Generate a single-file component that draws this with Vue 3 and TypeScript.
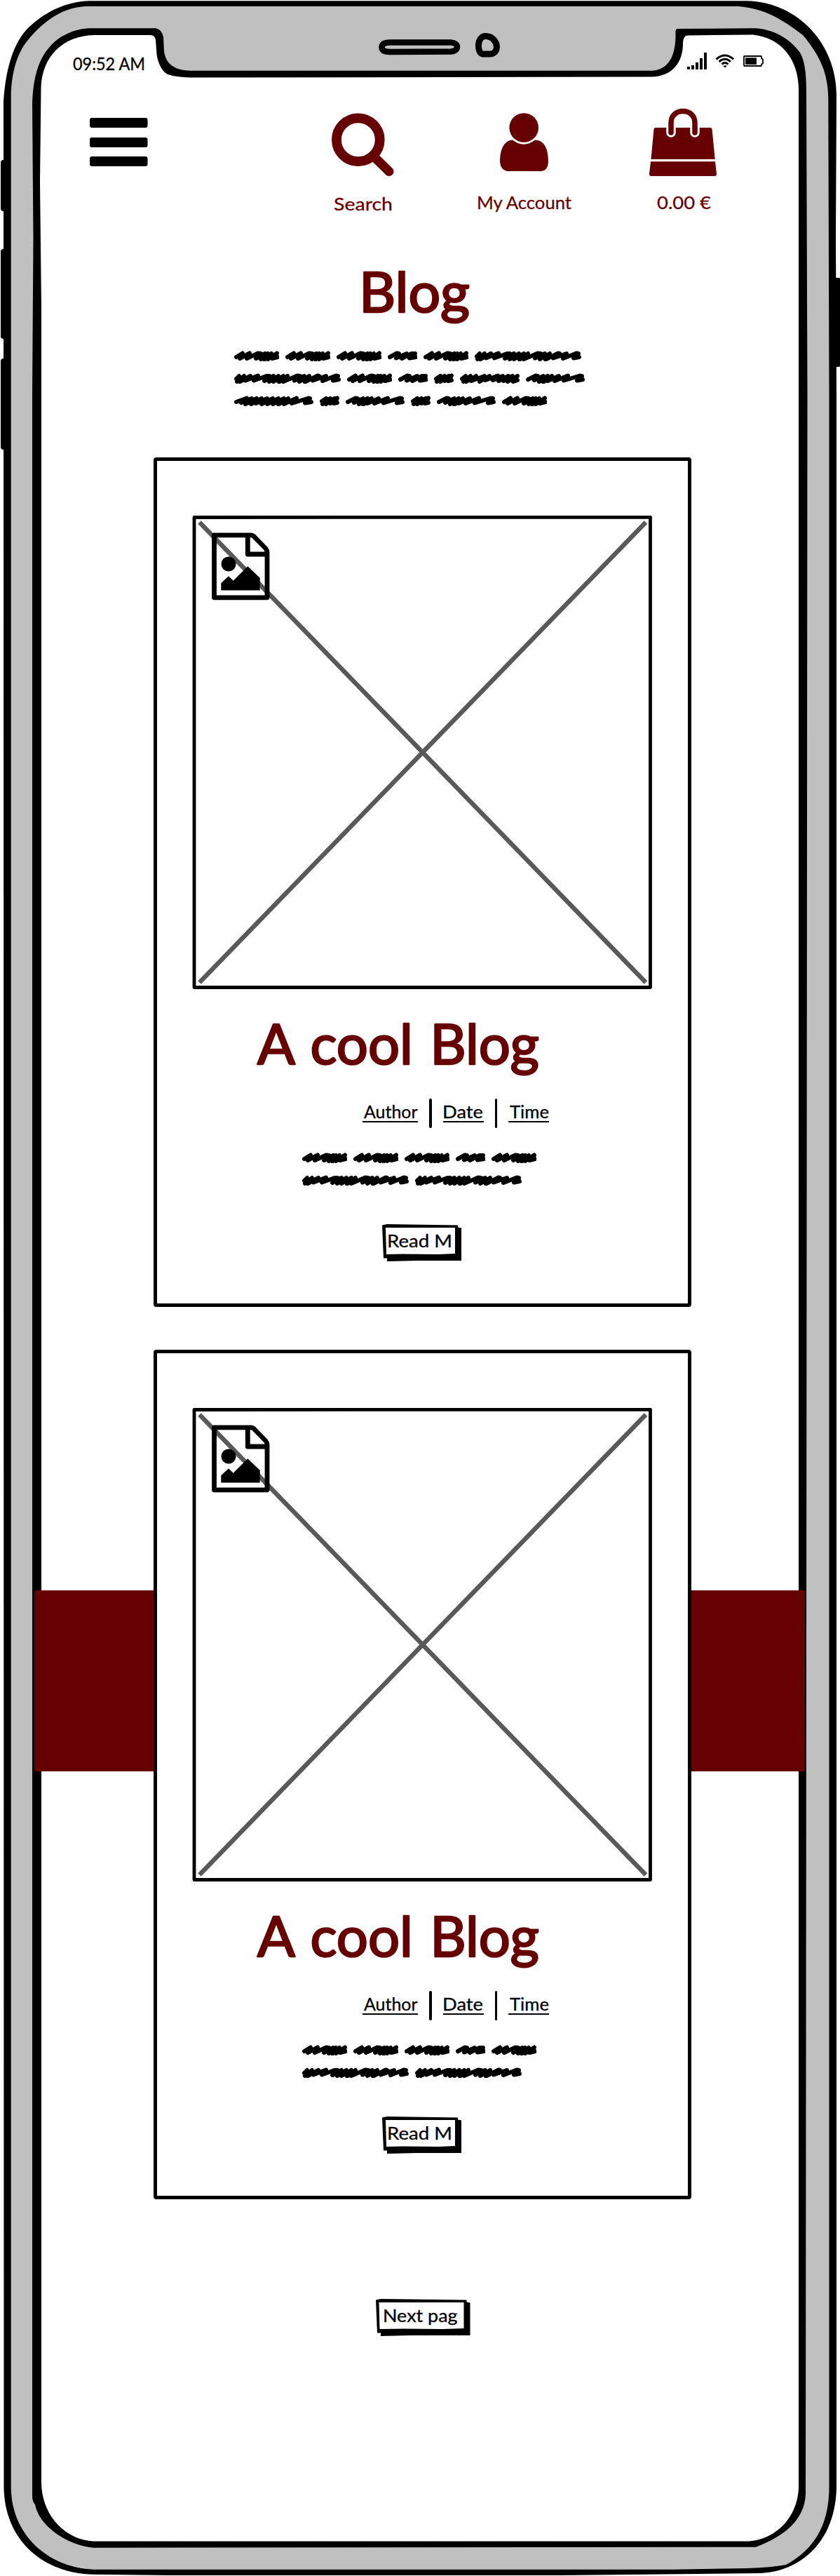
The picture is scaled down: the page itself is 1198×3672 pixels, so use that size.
<script setup lang="ts">
import { h } from 'vue'

interface LetteringProps {
  text: string
  width: number
  cap: number
  left?: number
  right?: number
}

// Text fitted to an exact ink width; the svg box spans cap height, baseline at the bottom edge.
const Lettering = (p: LetteringProps) => {
  const left = p.left ?? 0
  const right = p.right ?? 0
  return h('svg', { class: 'lettering', width: p.width, height: p.cap }, [
    h(
      'text',
      {
        x: -left,
        y: p.cap,
        'font-size': p.cap / 0.722,
        textLength: p.width + left + right,
        lengthAdjust: 'spacingAndGlyphs',
      },
      p.text,
    ),
  ])
}
Lettering.props = ['text', 'width', 'cap', 'left', 'right']

type Word = 'nnus' | 'nns' | 'long' | 'us' | 'usnu' | 'nusn' | 'mass'

const words: Record<Word, { w: number; d: string }> = {
  nnus: { w: 64, d: '3,9 12,3.5 8,11 22,3.5 18,11 34,3.5 38,4 31,11 44,4 38,12 48,4 43,12.5 53,4 48,12 61,3.5 54,11 62,9' },
  nns: { w: 42, d: '3,9 13,3.5 16,4 12,10.5 27,4 20,11 34,4 39,4 31,10.5 40,9' },
  long: { w: 152, d: '3,8 7,4 4,12 14,4 8,12 23,4 16,10.5 34,3.5 28,10.5 46,4 50,4 43,11 56,4 50,12 63,4 56,12 70,4 64,12.5 76,4 70,12 90,3.5 94,4 86,10.5 100,4 93,12 107,4 101,12.5 119,3.5 121,4 112,10.5 131,4 126,11 145,3.5 148,4 141,10.5 149,9' },
  us: { w: 28, d: '3,8 9,4 4,12 15,4 9,12 21,4 15,11 25,3.5 20,11 25,10' },
  usnu: { w: 85, d: '3,8 8,4 5,12 15,4 9,12 23,4 16,11 35,4 28,12 42,4 36,10 54,3.5 47,10 61,4 55,11 69,4 62,11 75,4 68,12 82,4 76,12 82,10' },
  nusn: { w: 84, d: '3,9 14,3.5 17,4 12,10 25,4 19,12 31,4 25,12.5 37,4 31,11 47,4 41,11 60,3.5 54,10.5 77,3.5 80,4 73,10.5 81,9' },
  mass: { w: 113, d: '3,9 18,3.5 10,10 25,4 16,12 32,4 24,12 39,4 31,11 47,4 39,12 55,4 47,12 63,4 55,12 71,4 63,12.5 77,4 71,12 89,3.5 82,11 106,3.5 108,4 101,10.5 110,9' },
}

const intro: Word[][] = [
  ['nnus', 'nnus', 'nnus', 'nns', 'nnus', 'long'],
  ['long', 'nnus', 'nns', 'us', 'usnu', 'nusn'],
  ['mass', 'us', 'nusn', 'us', 'nusn', 'nnus'],
]
const excerpt: Word[][] = [
  ['nnus', 'nnus', 'nnus', 'nns', 'nnus'],
  ['long', 'long'],
]

const posts = [1, 2]
</script>

<template>
  <div class="phone">
    <svg class="frame" width="1198" height="3672" viewBox="0 0 1198 3672">
      <g fill="#000">
        <rect x="1" y="228" width="10" height="73" rx="4" />
        <rect x="1" y="355" width="10" height="128" rx="4" />
        <rect x="1" y="511" width="10" height="130" rx="4" />
        <rect x="1187" y="396" width="14" height="127" rx="5" />
        <path d="M126 1.3H1065C1140 3 1193 65 1193 135L1192 340L1193 560V3545C1192 3620 1145 3665 1085 3668L800 3671H240L133 3669.7C60 3668 7 3620 5.5 3547L5 147C7 110 15 67 38 42C55 25 85 3 126 1.3Z" />
      </g>
      <path fill="#c0c0c0" d="M122 9H1053C1090 12 1115 27 1145 50C1170 80 1181 105 1181.3 140L1182.5 560V3547C1182 3595 1165 3632 1121 3656Q1100 3660 1065 3661L960 3662.7H133C70 3660 17 3615 15.7 3547V133C17 105 23 77 40 57C58 35 85 11 122 9Z" />
      <path fill="#000" d="M126 40.3H222Q231 42 233 53L234 73C236 90 248 100.7 272 100.7H931C950 99 963 85 963.500 52V45Q963.500 41 967 41L1076 40.3C1100 41 1125 53 1141 75C1148 88 1150 105 1150 133L1151.500 560L1149 3553C1149 3590 1120 3615 1078 3630.700L133 3631.700C95 3628 55 3600 50 3570Q46 3566 46 3558V560L47.500 340L46 150C47 100 60 70 88 52Q108 41 126 40.3Z" />
      <path fill="#fff" d="M134 50H214Q221 50 222 57L223.500 77C225 90 232 104 241 106.500Q250 110 279 110.500L929 109.500C958 109 974 90 974 62Q974 50.500 981 50.500L1074 49.500C1115 54 1138 85 1139 125V3547C1137 3590 1105 3620 1068 3622.500H133C92 3620 60 3585 59 3540V440L57 260L58.500 125C60 80 90 51 134 50Z" />
      <g fill="#c0c0c0" stroke="#000" stroke-linejoin="round">
        <path stroke-width="8.500" d="M556 60.500H643C655 61 655 73 643 73.500L556 74Q544.500 74 544.500 67Q545 60.500 556 60.500Z" />
        <path stroke-width="9" d="M692 51.500C702 51 708.500 60 708.500 67C708 74 704 77 699 77H688C680 75 680 52 692 51.500Z" />
      </g>
    </svg>

    <div class="band"></div>

    <div class="screen">
      <div class="status">
        <Lettering text="09:52 AM" :width="100" :cap="17.5" :left="1" :right="2" />
        <svg class="indicators" width="110" height="30" viewBox="979 73 110 30">
          <path d="M980 95h4v4h-4zM986 93h4v6h-4zM992 89h4v10h-4zM998 83h4v16h-4zM1004 75h4v24h-4z" />
          <g fill="none" stroke="#000" stroke-width="3">
            <path d="M1021.500 84.500Q1034 73.500 1046 84.500" />
            <path d="M1025.500 88Q1034 80.500 1042 88" />
            <path d="M1029.500 91.500Q1034 87.500 1038.500 91.500" />
          </g>
          <path d="M1031 93.500h6l-3 3z" />
          <path fill="none" stroke="#000" stroke-width="1.800" stroke-linejoin="round" d="M1062 80h23q1 0 1 1v2l2 2v5l-2 2v1q0 1-1 1h-23q-1 0-1-1v-12q0-1 1-1z" />
          <path d="M1063 82.300h16v9.700h-16z" />
        </svg>
      </div>

      <nav class="toolbar">
        <svg class="menu" width="83" height="69" viewBox="0 0 83 69">
          <rect width="82.500" height="14" rx="3" />
          <rect y="28" width="82.500" height="14" rx="3" />
          <rect y="55" width="82.500" height="14" rx="3" />
        </svg>
        <a class="tool search">
          <svg width="96" height="100" viewBox="470 152 96 100">
            <circle cx="510.800" cy="199.300" r="30.900" fill="none" stroke="#600" stroke-width="13.800" />
            <path d="M533 223L555 244.500" stroke="#600" stroke-width="13" stroke-linecap="round" />
          </svg>
          <Lettering text="Search" :width="81" :cap="18.5" :left="1" :right="2" />
        </a>
        <a class="tool account">
          <svg width="136" height="100" viewBox="679 152 136 100">
            <circle cx="747.200" cy="182" r="20.800" />
            <path d="M731 199.500Q747 212 763 199.500C777 200 782 213 782 231Q781 244 771 244H723Q714 242 713 231C713 213 719 200 731 199.500Z" />
          </svg>
          <Lettering text="My Account" :width="132" :cap="18.5" :left="2" :right="1" />
        </a>
        <a class="tool bag">
          <svg width="100" height="100" viewBox="924 152 100 100">
            <path d="M935 182H1013Q1015 182 1015.500 184L1019.700 227H928.500L932.500 184Q933 182 935 182ZM928 230.300H1020L1022 248Q1022 251 1019 251H929Q926 251 926 248Z" />
            <path fill="none" stroke="#fff" stroke-width="13.500" stroke-linecap="round" d="M957 189V176M991 189V176" />
            <path fill="none" stroke="#600" stroke-width="7.500" stroke-linecap="round" d="M957 189V175C957 153 991 153 991 175V189" />
          </svg>
          <Lettering text="0.00 €" :width="75" :cap="18.5" :left="1" :right="1" />
        </a>
      </nav>

      <header class="intro">
        <h1 class="title"><Lettering text="Blog" :width="151" :cap="58" :left="6" :right="1" /></h1>
        <div class="scribbles">
          <div v-for="(line, i) in intro" :key="i" class="line">
            <svg v-for="(word, j) in line" :key="j" :width="words[word].w" height="15">
              <polyline :points="words[word].d" />
            </svg>
          </div>
        </div>
      </header>

      <main class="posts">
        <article v-for="post in posts" :key="post" class="card">
          <svg class="picture" width="656" height="675" viewBox="274 734.500 656 675">
            <path d="M284.500 744L921 1400M921 744L284.500 1400" stroke="#595959" stroke-width="6.500" />
            <path fill="none" stroke="#000" stroke-width="4.800" stroke-linejoin="round" d="M277 737L600 736.800H927.500V1407H277Z" />
            <path fill="none" stroke="#000" stroke-width="6.800" stroke-linejoin="round" d="M305.500 762.300H358Q360.500 762.300 362 764L379 781.500Q381 784 381 787V851.300H305.500ZM353.300 764V789.500H379" />
            <circle cx="326" cy="803.500" r="10.500" />
            <path d="M315.300 841V830.700L326 820.700L332.700 827.300L353.300 806.700L370.700 823.300V841Z" />
          </svg>
          <h2 class="title"><Lettering text="A cool Blog" :width="401" :cap="58" :left="0" :right="1" /></h2>
          <div class="meta">
            <a><Lettering text="Author" :width="76" :cap="18.5" :right="0.500" /></a>
            <i></i>
            <a><Lettering text="Date" :width="55" :cap="18.5" :left="2" :right="1" /></a>
            <i></i>
            <a><Lettering text="Time" :width="55" :cap="18.5" :right="1" /></a>
          </div>
          <div class="scribbles">
            <div v-for="(line, i) in excerpt" :key="i" class="line">
              <svg v-for="(word, j) in line" :key="j" :width="words[word].w" height="15">
                <polyline :points="words[word].d" />
              </svg>
            </div>
          </div>
          <button class="button">
            <svg class="plate" width="113" height="54" viewBox="0 0 113 54">
              <path d="M0 1.500L7 0L108 1.500V4.500L113 5.500V52L50 52L7 53V48.500H2Z" />
              <path fill="#fff" d="M5 5L104 5V42L80 43L30 42.500L6 43Z" />
            </svg>
            <Lettering text="Read M" :width="89" :cap="18.5" :left="2" :right="2" />
          </button>
        </article>
      </main>

      <button class="button next">
        <svg class="plate" width="135" height="54" viewBox="0 0 135 54">
          <path d="M0 1.500L7 0L129.500 1.500V4.500L134.500 5.500V52L50 52L7 53V48.500H2Z" />
          <path fill="#fff" d="M4.500 5L125.500 5V42L95 43L40 42.500L5.500 43Z" />
        </svg>
        <Lettering text="Next pag" :width="104" :cap="18.5" :left="2" :right="0.500" />
      </button>
    </div>
  </div>
</template>

<style>
body {
  margin: 0;
  background: #fff;
}
</style>

<style scoped>
.phone {
  position: relative;
  width: 1198px;
  height: 3672px;
  overflow: hidden;
  font-family: Lato, "Open Sans", sans-serif;
  color: #000;
}
svg {
  display: block;
  flex: none;
}
.frame {
  position: absolute;
  inset: 0;
}
.band {
  position: absolute;
  top: 2266.500px;
  left: 48.500px;
  width: 1099px;
  height: 258px;
  border-radius: 3px;
  background: #600;
}
.screen {
  position: relative;
  display: flex;
  flex-direction: column;
}
.lettering {
  overflow: visible;
  fill: currentColor;
  stroke: currentColor;
  stroke-width: 0.3;
  stroke-linejoin: round;
}
.status {
  display: flex;
  align-items: flex-start;
  justify-content: space-between;
  padding: 73px 109px 0 105px;
  height: 41px;
}
.status .lettering {
  margin-top: 9px;
}
.toolbar {
  display: flex;
  align-items: flex-start;
  height: 158px;
  padding: 38px 0 0 128px;
}
.menu {
  margin-top: 16px;
}
.tool {
  display: flex;
  flex-direction: column;
  align-items: center;
  fill: #600;
  color: #600;
}
.search {
  margin-left: 259px;
  gap: 29px;
}
.account {
  margin-left: 113px;
  gap: 27px;
}
.bag {
  margin-left: 109px;
  gap: 27px;
}
.search .lettering {
  margin-right: 2px;
}
.account .lettering,
.bag .lettering {
  margin-left: 2px;
}
.title {
  margin: 0;
  font-weight: 400;
  word-spacing: 4px;
  color: #600;
}
.title .lettering {
  stroke-width: 2.5;
}
.intro {
  display: flex;
  flex-direction: column;
  padding: 77px 0 0 334px;
}
.intro .title {
  margin-left: 184px;
}
.intro .scribbles {
  margin-top: 55px;
}
.scribbles {
  display: flex;
  flex-direction: column;
  gap: 17px;
}
.line {
  display: flex;
  gap: 9px;
}
.line polyline {
  fill: none;
  stroke: #000;
  stroke-width: 6;
  stroke-linecap: round;
  stroke-linejoin: round;
}
.posts {
  display: flex;
  flex-direction: column;
  gap: 61px;
  margin: 73px 0 0 219px;
}
.card {
  box-sizing: border-box;
  display: flex;
  flex-direction: column;
  align-items: flex-start;
  width: 767px;
  height: 1211px;
  padding: 77.500px 0 0 50px;
  border: 5px solid #000;
  border-radius: 4px;
  background: #fff;
}
.card .title {
  margin: 49.500px 0 0 93px;
}
.meta {
  display: flex;
  align-items: flex-start;
  margin: 49px 0 0 243px;
}
.meta a {
  box-sizing: border-box;
  height: 34px;
  padding: 9px 1.500px 0;
  border-bottom: 2px solid #000;
}
.meta i {
  width: 3.500px;
  height: 42px;
  margin: 0 16px;
  border-radius: 2px;
  background: #000;
}
.card .scribbles {
  margin: 35px 0 0 157px;
}
.button {
  position: relative;
  display: block;
  width: 113px;
  height: 54px;
  padding: 0;
  border: 0;
  background: none;
  font: inherit;
  color: #000;
}
.button .lettering {
  position: relative;
  margin: -7px 0 0 8.500px;
}
.plate {
  position: absolute;
  top: 0;
  left: 0;
}
.card .button {
  margin: 55px 0 0 271px;
}
.next {
  width: 135px;
  margin: 142px 0 0 535.500px;
}
.next .lettering {
  margin-left: 12px;
}
</style>
